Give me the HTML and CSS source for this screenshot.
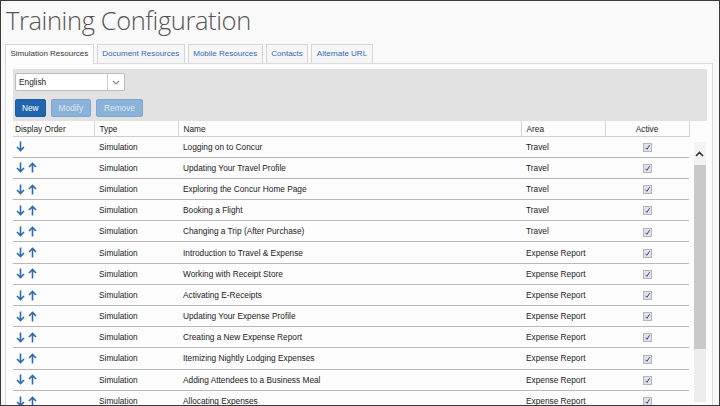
FILE: index.html
```html
<!DOCTYPE html>
<html>
<head>
<meta charset="utf-8">
<link rel="stylesheet" href="styles.css">
</head>
<body>
<div class="page">
  <h1 class="title">Training Configuration</h1>
  <div class="tabs">
    <div class="tab active">Simulation Resources</div>
    <div class="tab">Document Resources</div>
    <div class="tab">Mobile Resources</div>
    <div class="tab">Contacts</div>
    <div class="tab">Alternate URL</div>
  </div>
  <div class="panel">
    <div class="toolbar">
      <div class="select">
        <span class="select-text">English</span>
        <span class="select-btn"><svg width="8" height="5" viewBox="0 0 8 5"><path d="M1 1 L4 4 L7 1" fill="none" stroke="#888" stroke-width="1.1"/></svg></span>
      </div>
      <div class="buttons">
        <button class="btn primary">New</button>
        <button class="btn disabled">Modify</button>
        <button class="btn disabled">Remove</button>
      </div>
    </div>
    <div class="grid">
      <table class="data">
        <colgroup>
          <col class="c1"><col class="c2"><col class="c3"><col class="c4"><col class="c5">
        </colgroup>
        <thead>
          <tr><th>Display Order</th><th>Type</th><th>Name</th><th>Area</th><th class="center">Active</th></tr>
        </thead>
        <tbody id="rows"></tbody>
      </table>
      <div class="scrollbar">
        <div class="sb-up"><svg width="9" height="6" viewBox="0 0 9 6"><path d="M1 5 L4.5 1.5 L8 5" fill="none" stroke="#333" stroke-width="1.6"/></svg></div>
        <div class="sb-thumb"></div>
      </div>
    </div>
  </div>
</div>
<script src="app.js"></script>
</body>
</html>
```
FILE: app.js
```js
const data = [
  ["Logging on to Concur","Travel"],
  ["Updating Your Travel Profile","Travel"],
  ["Exploring the Concur Home Page","Travel"],
  ["Booking a Flight","Travel"],
  ["Changing a Trip (After Purchase)","Travel"],
  ["Introduction to Travel &amp; Expense","Expense Report"],
  ["Working with Receipt Store","Expense Report"],
  ["Activating E-Receipts","Expense Report"],
  ["Updating Your Expense Profile","Expense Report"],
  ["Creating a New Expense Report","Expense Report"],
  ["Itemizing Nightly Lodging Expenses","Expense Report"],
  ["Adding Attendees to a Business Meal","Expense Report"],
  ["Allocating Expenses","Expense Report"]
];
const down = '<svg class="arr" width="9" height="11" viewBox="0 0 9 11"><path d="M4.5 0.5 V9.5 M1 6 L4.5 9.5 L8 6" fill="none" stroke="#2b6cb0" stroke-width="1.6"/></svg>';
const up = '<svg class="arr" width="9" height="11" viewBox="0 0 9 11"><path d="M4.5 10.5 V1.5 M1 5 L4.5 1.5 L8 5" fill="none" stroke="#2b6cb0" stroke-width="1.6"/></svg>';
const check = '<span class="chk"><svg width="7" height="7" viewBox="0 0 7 7"><path d="M1.5 3.8 L3 5.3 L5.6 1.2" fill="none" stroke="#3a4a6a" stroke-width="1"/></svg></span>';
document.getElementById('rows').innerHTML = data.map((r, i) =>
  `<tr><td class="order">${down}${i ? up : ''}</td><td>Simulation</td><td>${r[0]}</td><td>${r[1]}</td><td class="center">${check}</td></tr>`
).join('');
```
FILE: styles.css
```css
* { box-sizing: border-box; }
html, body { margin: 0; padding: 0; }
body {
  width: 720px;
  height: 406px;
  overflow: hidden;
  font-family: "Liberation Sans", Arial, sans-serif;
  font-size: 8.3px;
  color: #222;
}
.page {
  width: 720px;
  height: 406px;
  border: 1px solid #3a3a3a;
  background: #f9f9f9;
  overflow: hidden;
  padding: 0 6px 0 4px;
}
.title {
  margin: 0;
  padding: 2px 0 0 1px;
  height: 43px;
  font-family: "Open Sans", sans-serif;
  font-weight: 300;
  font-size: 25.5px;
  letter-spacing: -0.4px;
  color: #555;
  line-height: 34px;
}
.tabs {
  display: flex;
  gap: 3px;
  height: 19px;
  align-items: flex-end;
}
.tab {
  height: 19px;
  padding: 0 4.5px;
  font-size: 8px;
  line-height: 18px;
  border: 1px solid #d6d6d6;
  border-bottom: none;
  background: #f6f6f6;
  color: #2d6cb5;
  white-space: nowrap;
}
.tab.active {
  background: #fdfdfd;
  color: #333;
  height: 20px;
  margin-bottom: -1px;
  position: relative;
}
.panel {
  border: 1px solid #dcdcdc;
  background: #fdfdfd;
  padding: 5px 5px 0 7px;
  height: 400px;
}
.toolbar {
  background: #e2e2e2;
  height: 52px;
  padding: 4px 2px;
}
.select {
  display: flex;
  width: 110px;
  height: 18px;
  border: 1px solid #bdbdbd;
  background: #fff;
  border-radius: 2px;
}
.select-text {
  flex: 1;
  padding-left: 3px;
  line-height: 16px;
  color: #222;
}
.select-btn {
  width: 17px;
  border-left: 1px solid #d0d0d0;
  display: flex;
  align-items: center;
  justify-content: center;
}
.buttons {
  display: flex;
  gap: 5px;
  margin-top: 8px;
}
.btn {
  height: 18px;
  font-family: "Liberation Sans", Arial, sans-serif;
  font-size: 8.3px;
  color: #fff;
  border: 1px solid #1d5d9e;
  border-radius: 2px;
  padding: 0 6px;
  background: #2066ae;
}
.btn.disabled {
  background: #8bb2d8;
  border-color: #7ea6cf;
  color: #dbe8f4;
  padding: 0 7px;
}
.grid {
  display: flex;
  gap: 4px;
}
.data {
  width: 676px;
  border-collapse: collapse;
  table-layout: fixed;
}
.c1 { width: 81px; }
.c2 { width: 84px; }
.c3 { width: 343px; }
.c4 { width: 84px; }
.c5 { width: 84px; }
.data th {
  font-weight: normal;
  text-align: left;
  height: 15px;
  padding: 1px 5px 0;
  color: #222;
  border-bottom: 1px solid #cfcfcf;
  border-left: 1px solid #d4d4d4;
  white-space: nowrap;
}
.data th:first-child { padding-left: 2px; border-left: none; }
.data th:last-child { border-right: 1px solid #d4d4d4; }
.data td {
  height: 21.2px;
  padding: 0 5px;
  border-bottom: 1px solid #b8b8b8;
  white-space: nowrap;
  vertical-align: middle;
}
.data td.order { padding-left: 3px; }
.data .center { text-align: center; }
.arr { vertical-align: middle; margin-right: 3px; }
.chk {
  display: inline-block;
  width: 9px;
  height: 9px;
  border: 1px solid #b5b5b5;
  background: #dfe2ea;
  vertical-align: middle;
  line-height: 0;
  padding: 0;
}
.chk svg { display: block; }
.scrollbar {
  width: 12px;
  margin-top: 21px;
  height: 260px;
  background: #ededed;
  display: flex;
  flex-direction: column;
}
.sb-up {
  height: 23px;
  display: flex;
  align-items: center;
  justify-content: center;
  background: #f3f3f3;
}
.sb-thumb {
  height: 184px;
  background: #c9c9c9;
}
```
